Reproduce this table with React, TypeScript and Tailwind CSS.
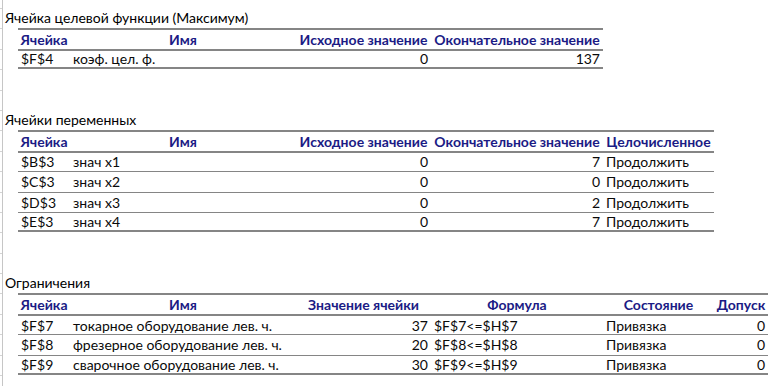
import React from "react";

// Solver "Answer report" sheet fragment
const ROW = "h-[20.4px] flex items-center";
const HEAD = "font-bold text-[#1b1b85] text-center";

type Cell = { w: string; text?: string; align?: "l" | "r" | "c"; head?: boolean };

function Cells({ cells }: { cells: Cell[] }) {
  return (
    <>
      {cells.map((c, i) => (
        <div
          key={i}
          className={`${c.w} shrink-0 whitespace-nowrap overflow-visible ${
            c.head
              ? HEAD
              : c.align === "r"
              ? "text-right pr-[3px]"
              : c.align === "c"
              ? "text-center"
              : "text-left pl-[3px]"
          }`}
        >
          {c.text}
        </div>
      ))}
    </>
  );
}

function TableRow({
  cells,
  border,
  last,
}: {
  cells: Cell[];
  border: "thick" | "thin";
  last?: boolean;
}) {
  return (
    <div className={`${ROW} pl-[15px]`}>
      <div
        className={`flex h-full items-center border-[#858585] ${
          border === "thick" ? "border-t-2" : "border-t"
        } ${last ? "border-b-2" : ""}`}
      >
        <Cells cells={cells} />
      </div>
    </div>
  );
}

function Title({ children }: { children: React.ReactNode }) {
  return <div className={`${ROW} pl-[2px] pb-[2px] text-black`}>{children}</div>;
}

function Empty() {
  return <div className={ROW} />;
}

const B = "w-[52px]";
const C = "w-[226px]";
const D = "w-[135px]";
const E = "w-[172px]";
const F = "w-[111px]";
const G = "w-[54px]";

const vars = [
  ["$B$3", "знач x1", "0", "7"],
  ["$C$3", "знач x2", "0", "0"],
  ["$D$3", "знач x3", "0", "2"],
  ["$E$3", "знач x4", "0", "7"],
];

const cons = [
  ["$F$7", "токарное оборудование лев. ч.", "37", "$F$7<=$H$7"],
  ["$F$8", "фрезерное оборудование лев. ч.", "20", "$F$8<=$H$8"],
  ["$F$9", "сварочное оборудование лев. ч.", "30", "$F$9<=$H$9"],
];

export default function App() {
  const ticks = Array.from({ length: 19 });
  return (
    <div className="w-[776px] h-[386px] overflow-hidden bg-white flex font-[Lato,'Liberation_Sans',sans-serif] text-[14px] text-[#0a0a0a]">
      {/* sheet gridline strip on the left */}
      <div className="w-[3px] shrink-0 border-r border-[#c6c6c6] pt-[8px]">
        {ticks.map((_, i) => (
          <div key={i} className="h-[20.4px] border-t border-[#d4d4d4]" />
        ))}
      </div>

      <div className="flex-1 pt-[8px]">
        <Title>Ячейка целевой функции (Максимум)</Title>
        <TableRow
          border="thick"
          cells={[
            { w: B, text: "Ячейка", head: true },
            { w: C, text: "Имя", head: true },
            { w: D, text: "Исходное значение", head: true },
            { w: E, text: "Окончательное значение", head: true },
          ]}
        />
        <TableRow
          border="thick"
          last
          cells={[
            { w: B, text: "$F$4" },
            { w: C, text: "коэф. цел. ф." },
            { w: D, text: "0", align: "r" },
            { w: E, text: "137", align: "r" },
          ]}
        />
        <Empty />
        <Empty />

        <Title>Ячейки переменных</Title>
        <TableRow
          border="thick"
          cells={[
            { w: B, text: "Ячейка", head: true },
            { w: C, text: "Имя", head: true },
            { w: D, text: "Исходное значение", head: true },
            { w: E, text: "Окончательное значение", head: true },
            { w: F, text: "Целочисленное", head: true },
          ]}
        />
        {vars.map((v, i) => (
          <TableRow
            key={v[0]}
            border={i === 0 ? "thick" : "thin"}
            last={i === vars.length - 1}
            cells={[
              { w: B, text: v[0] },
              { w: C, text: v[1] },
              { w: D, text: v[2], align: "r" },
              { w: E, text: v[3], align: "r" },
              { w: F, text: "Продолжить" },
            ]}
          />
        ))}
        <Empty />
        <Empty />

        <Title>Ограничения</Title>
        <TableRow
          border="thick"
          cells={[
            { w: B, text: "Ячейка", head: true },
            { w: C, text: "Имя", head: true },
            { w: D, text: "Значение ячейки", head: true },
            { w: E, text: "Формула", head: true },
            { w: F, text: "Состояние", head: true },
            { w: G, text: "Допуск", head: true },
          ]}
        />
        {cons.map((c, i) => (
          <TableRow
            key={c[0]}
            border={i === 0 ? "thick" : "thin"}
            last={i === cons.length - 1}
            cells={[
              { w: B, text: c[0] },
              { w: C, text: c[1] },
              { w: D, text: c[2], align: "r" },
              { w: E, text: c[3] },
              { w: F, text: "Привязка" },
              { w: G, text: "0", align: "r" },
            ]}
          />
        ))}
      </div>
    </div>
  );
}
